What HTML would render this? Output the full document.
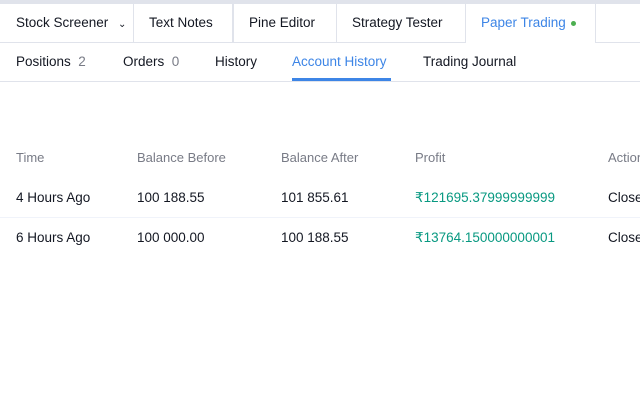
<!DOCTYPE html>
<html><head><style>
*{margin:0;padding:0;box-sizing:border-box}
body{width:640px;height:400px;background:#fff;font-family:"Liberation Sans",sans-serif;color:#131722;position:relative;overflow:hidden;font-size:13.5px}
.top{position:absolute;left:0;top:0;width:640px;height:43px;background:#e0e3eb}
.tab{position:absolute;top:4px;height:38px;background:#fff;line-height:38px;padding-left:15px;white-space:nowrap}
.line{position:absolute;left:0;width:640px;height:1px;background:#e0e3eb}
.t{position:absolute;white-space:nowrap}
.g{color:#787b86}
.grn{color:#089981}
</style></head><body>
<div class="top"></div>
<div class="tab" style="left:0;width:133px;padding-left:16px">Stock Screener <span style="font-size:10px;margin-left:6px">&#8964;</span></div>
<div class="tab" style="left:134px;width:98px">Text Notes</div>
<div class="tab" style="left:234px;width:102px">Pine Editor</div>
<div class="tab" style="left:337px;width:128px">Strategy Tester</div>
<div class="tab" style="left:466px;width:129px;height:39px;color:#3d85e6">Paper Trading <span style="display:inline-block;width:5px;height:5px;border-radius:50%;background:#4caf50;vertical-align:middle;margin-left:1px"></span></div>
<div class="tab" style="left:596px;width:44px"></div>
<div class="line" style="top:42px;width:466px"></div>
<div class="line" style="top:42px;left:595px;width:45px"></div>
<div class="t" style="left:16px;top:54px">Positions <span class="g">&nbsp;2</span></div>
<div class="t" style="left:123px;top:54px">Orders <span class="g">&nbsp;0</span></div>
<div class="t" style="left:215px;top:54px">History</div>
<div class="t" style="left:292px;top:54px;color:#3d85e6">Account History</div>
<div style="position:absolute;left:292px;top:78px;width:99px;height:3px;background:#3d85e6"></div>
<div class="t" style="left:423px;top:54px">Trading Journal</div>
<div class="line" style="top:81px"></div>
<div class="t g" style="left:16px;top:150px;font-size:13px">Time</div>
<div class="t g" style="left:137px;top:150px;font-size:13px">Balance Before</div>
<div class="t g" style="left:281px;top:150px;font-size:13px">Balance After</div>
<div class="t g" style="left:415px;top:150px;font-size:13px">Profit</div>
<div class="t g" style="left:608px;top:150px;font-size:13px">Action</div>
<div class="t" style="left:16px;top:190px">4 Hours Ago</div>
<div class="t" style="left:137px;top:190px">100 188.55</div>
<div class="t" style="left:281px;top:190px">101 855.61</div>
<div class="t grn" style="left:415px;top:190px">₹121695.37999999999</div>
<div class="t" style="left:608px;top:190px">Closed</div>
<div class="line" style="top:217px;background:#f0f3fa"></div>
<div class="t" style="left:16px;top:230px">6 Hours Ago</div>
<div class="t" style="left:137px;top:230px">100 000.00</div>
<div class="t" style="left:281px;top:230px">100 188.55</div>
<div class="t grn" style="left:415px;top:230px">₹13764.150000000001</div>
<div class="t" style="left:608px;top:230px">Closed</div>
</body></html>
